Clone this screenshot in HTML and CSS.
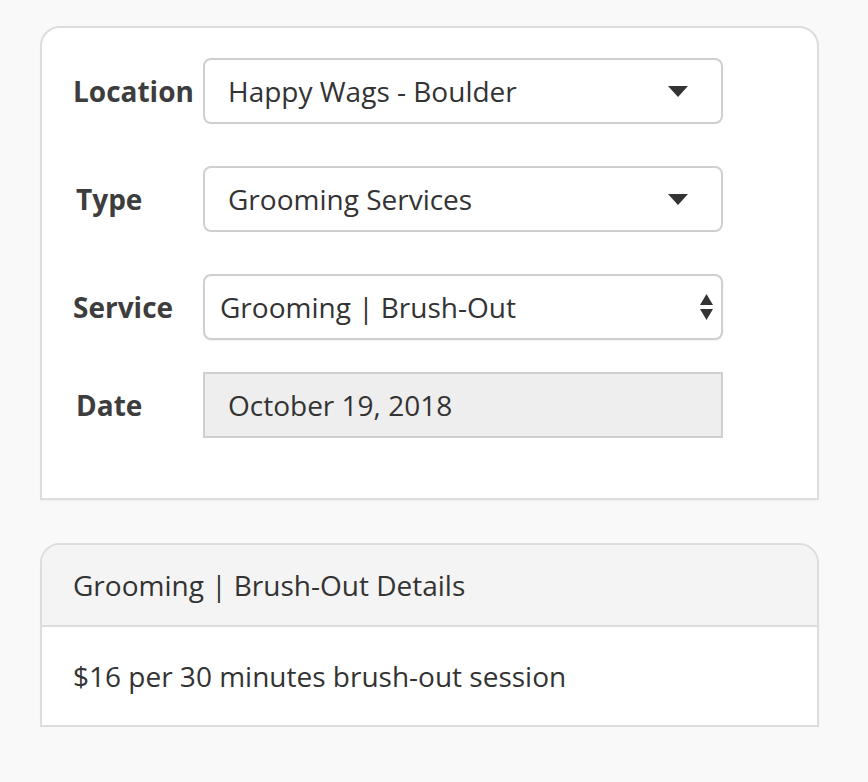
FILE: index.html
```html
<!DOCTYPE html>
<html>
<head>
<meta charset="utf-8">
<link rel="stylesheet" href="styles.css">
</head>
<body>
<div class="page">
  <div class="card form-card">
    <div class="row">
      <div class="label">Location</div>
      <div class="field select">
        <span class="value">Happy Wags - Boulder</span>
        <svg class="caret" width="20" height="11" viewBox="0 0 20 11"><path d="M0 0 H20 L10 11 Z" fill="#333"/></svg>
      </div>
    </div>
    <div class="row">
      <div class="label label-t">Type</div>
      <div class="field select">
        <span class="value">Grooming Services</span>
        <svg class="caret" width="20" height="11" viewBox="0 0 20 11"><path d="M0 0 H20 L10 11 Z" fill="#333"/></svg>
      </div>
    </div>
    <div class="row">
      <div class="label">Service</div>
      <div class="field select native">
        <span class="value">Grooming | Brush-Out</span>
        <svg class="updown" width="13" height="26" viewBox="0 0 13 26"><path d="M6.5 0 L13 11 H0 Z M0 15 H13 L6.5 26 Z" fill="#333"/></svg>
      </div>
    </div>
    <div class="row row-last">
      <div class="label label-t">Date</div>
      <div class="field date">
        <span class="value">October 19, 2018</span>
      </div>
    </div>
  </div>

  <div class="card details-card">
    <div class="details-head">Grooming | Brush-Out Details</div>
    <div class="details-body">$16 per 30 minutes brush-out session</div>
  </div>
</div>
</body>
</html>
```
FILE: styles.css
```css
html, body {
  margin: 0;
  padding: 0;
  background: #f9f9f9;
}
body {
  font-family: "Open Sans", "Noto Sans", sans-serif;
  color: #333;
}
.page {
  padding: 26px 0 0 40px;
  width: 779px;
}
.card {
  background: #fff;
  border: 2px solid #dddddd;
  border-radius: 20px 20px 0 0;
  box-shadow: 0 1px 2px rgba(0,0,0,0.04);
}
.form-card {
  padding: 30px 0 60px 31px;
}
.row {
  display: flex;
  align-items: center;
  margin-bottom: 42px;
}
.row-last {
  margin-bottom: 0;
}
.row:nth-child(3) {
  margin-bottom: 32px;
}
.label {
  width: 130px;
  font-weight: 700;
  font-size: 28px;
  color: #3d3d3d;
  white-space: nowrap;
}
.label-t {
  padding-left: 3px;
  width: 127px;
}
.field {
  box-sizing: border-box;
  width: 520px;
  height: 66px;
  border: 2px solid #cfcfcf;
  display: flex;
  align-items: center;
  font-size: 28px;
  color: #333;
}
.select {
  border-radius: 8px;
  background: #fff;
  padding: 0 33px 0 23px;
  justify-content: space-between;
}
.native {
  padding: 0 8px 0 15px;
  box-shadow: 0 1px 2px rgba(0,0,0,0.06);
}
.date {
  background: #eeeeee;
  padding-left: 23px;
}
.value {
  white-space: nowrap;
}
.details-card {
  margin-top: 43px;
}
.details-head {
  background: #f4f4f4;
  border-radius: 18px 18px 0 0;
  height: 82px;
  box-sizing: border-box;
  padding-left: 31px;
  display: flex;
  align-items: center;
  font-size: 28px;
  border-bottom: 2px solid #dddddd;
  color: #333;
}
.details-body {
  height: 98px;
  box-sizing: border-box;
  padding-left: 31px;
  display: flex;
  align-items: center;
  font-size: 28px;
  color: #333;
}
```
